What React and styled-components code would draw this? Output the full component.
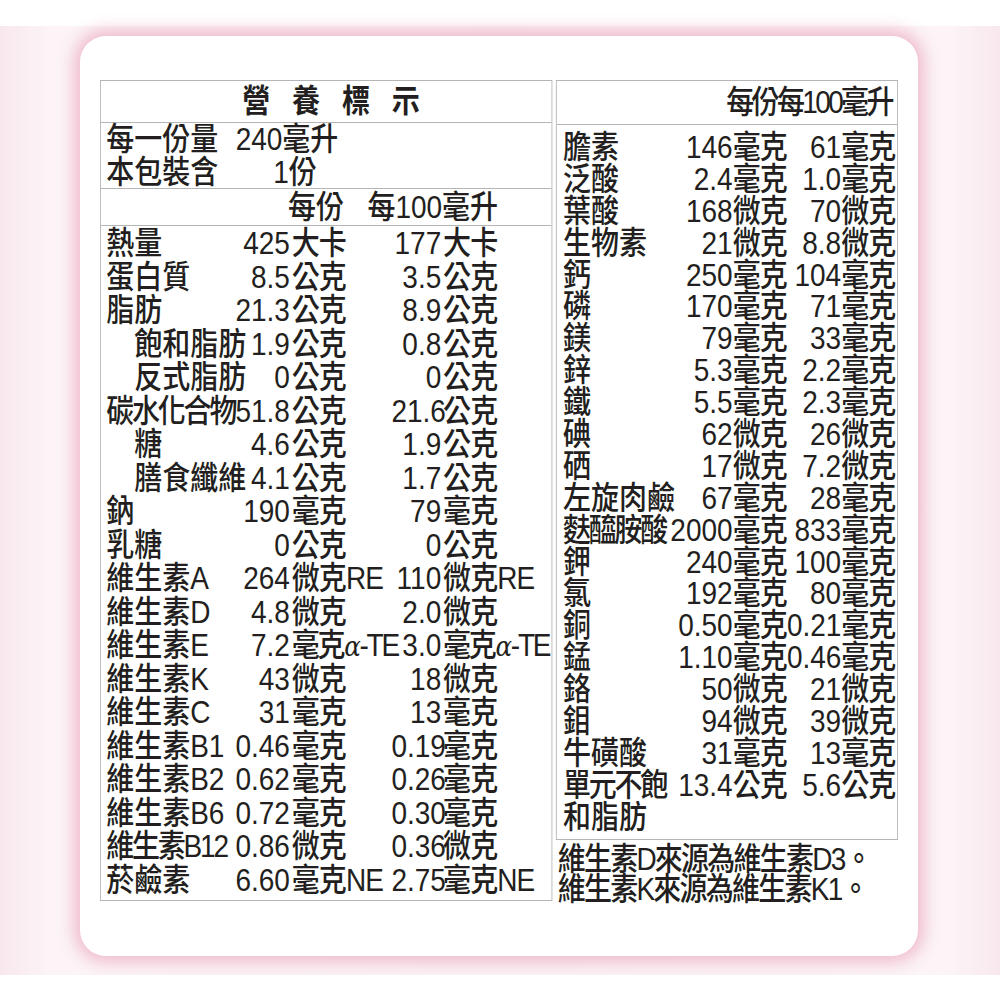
import React from "react";
import styled, { createGlobalStyle } from "styled-components";

const leftRows = [
  { name: "熱量", a: "425", au: "大卡", b: "177", bu: "大卡" },
  { name: "蛋白質", a: "8.5", au: "公克", b: "3.5", bu: "公克" },
  { name: "脂肪", a: "21.3", au: "公克", b: "8.9", bu: "公克" },
  { name: "飽和脂肪", a: "1.9", au: "公克", b: "0.8", bu: "公克", indent: true },
  { name: "反式脂肪", a: "0", au: "公克", b: "0", bu: "公克", indent: true },
  { name: "碳水化合物", a: "51.8", au: "公克", b: "21.6", bu: "公克", tight: true },
  { name: "糖", a: "4.6", au: "公克", b: "1.9", bu: "公克", indent: true },
  { name: "膳食纖維", a: "4.1", au: "公克", b: "1.7", bu: "公克", indent: true },
  { name: "鈉", a: "190", au: "毫克", b: "79", bu: "毫克" },
  { name: "乳糖", a: "0", au: "公克", b: "0", bu: "公克" },
  { name: "維生素A", a: "264", au: "微克RE", b: "110", bu: "微克RE" },
  { name: "維生素D", a: "4.8", au: "微克", b: "2.0", bu: "微克" },
  { name: "維生素E", a: "7.2", au: "毫克α-TE", b: "3.0", bu: "毫克α-TE" },
  { name: "維生素K", a: "43", au: "微克", b: "18", bu: "微克" },
  { name: "維生素C", a: "31", au: "毫克", b: "13", bu: "毫克" },
  { name: "維生素B1", a: "0.46", au: "毫克", b: "0.19", bu: "毫克" },
  { name: "維生素B2", a: "0.62", au: "毫克", b: "0.26", bu: "毫克" },
  { name: "維生素B6", a: "0.72", au: "毫克", b: "0.30", bu: "毫克" },
  { name: "維生素B12", a: "0.86", au: "微克", b: "0.36", bu: "微克", tight: true },
  { name: "菸鹼素", a: "6.60", au: "毫克NE", b: "2.75", bu: "毫克NE" },
];

const rightRows = [
  { name: "膽素", a: "146", au: "毫克", b: "61", bu: "毫克" },
  { name: "泛酸", a: "2.4", au: "毫克", b: "1.0", bu: "毫克" },
  { name: "葉酸", a: "168", au: "微克", b: "70", bu: "微克" },
  { name: "生物素", a: "21", au: "微克", b: "8.8", bu: "微克" },
  { name: "鈣", a: "250", au: "毫克", b: "104", bu: "毫克" },
  { name: "磷", a: "170", au: "毫克", b: "71", bu: "毫克" },
  { name: "鎂", a: "79", au: "毫克", b: "33", bu: "毫克" },
  { name: "鋅", a: "5.3", au: "毫克", b: "2.2", bu: "毫克" },
  { name: "鐵", a: "5.5", au: "毫克", b: "2.3", bu: "毫克" },
  { name: "碘", a: "62", au: "微克", b: "26", bu: "微克" },
  { name: "硒", a: "17", au: "微克", b: "7.2", bu: "微克" },
  { name: "左旋肉鹼", a: "67", au: "毫克", b: "28", bu: "毫克" },
  { name: "麩醯胺酸", a: "2000", au: "毫克", b: "833", bu: "毫克", tight: true },
  { name: "鉀", a: "240", au: "毫克", b: "100", bu: "毫克" },
  { name: "氯", a: "192", au: "毫克", b: "80", bu: "毫克" },
  { name: "銅", a: "0.50", au: "毫克", b: "0.21", bu: "毫克" },
  { name: "錳", a: "1.10", au: "毫克", b: "0.46", bu: "毫克" },
  { name: "鉻", a: "50", au: "微克", b: "21", bu: "微克" },
  { name: "鉬", a: "94", au: "微克", b: "39", bu: "微克" },
  { name: "牛磺酸", a: "31", au: "毫克", b: "13", bu: "毫克" },
  { name: "單元不飽", a: "13.4", au: "公克", b: "5.6", bu: "公克", tight: true },
  { name: "和脂肪" },
];

// units like 毫克α-TE get an italic alpha
function renderUnit(u) {
  if (!u || !u.includes("α")) return u;
  const [head, tail] = u.split("α");
  return (
    <Squeeze>
      {head}
      <Greek>α</Greek>
      {tail}
    </Squeeze>
  );
}

function LeftRow({ item }) {
  return (
    <LeftGrid>
      <NameNum $indent={item.indent}>
        <Name $tight={item.tight}>{item.name}</Name>
        <span>{item.a}</span>
      </NameNum>
      <Unit>{renderUnit(item.au)}</Unit>
      <Num>{item.b}</Num>
      <Unit>{renderUnit(item.bu)}</Unit>
    </LeftGrid>
  );
}

function RightRow({ item }) {
  return (
    <RightGrid>
      <NameNum>
        <Name $tight={item.tight}>{item.name}</Name>
        <span>{item.a}</span>
      </NameNum>
      <Unit $pad={0}>{item.au}</Unit>
      <Num>{item.b}</Num>
      <Unit $pad={0}>{item.bu}</Unit>
    </RightGrid>
  );
}

export default function App() {
  return (
    <>
      <GlobalStyle />
      <Band>
        <Card>
          <Condensed>
            <LeftTable>
              <Title>營養標示</Title>
              <Serving>
                <ServingLine>
                  <span>每一份量</span>
                  <span>240毫升</span>
                </ServingLine>
                <ServingLine>
                  <span>本包裝含</span>
                  <ServingValue $shift={43}>1份</ServingValue>
                </ServingLine>
              </Serving>
              <HeadRow>
                <span>每份</span>
                <span>每100毫升</span>
              </HeadRow>
              <LeftBody>
                {leftRows.map((r) => (
                  <LeftRow key={r.name} item={r} />
                ))}
              </LeftBody>
            </LeftTable>
            <RightColumn>
              <RightTable>
                <RightHead>每份每100毫升</RightHead>
                <RightBody>
                  {rightRows.map((r) => (
                    <RightRow key={r.name} item={r} />
                  ))}
                </RightBody>
              </RightTable>
              <Notes>
                <div>維生素D來源為維生素D3。</div>
                <div>維生素K來源為維生素K1。</div>
              </Notes>
            </RightColumn>
          </Condensed>
        </Card>
      </Band>
    </>
  );
}

const GlobalStyle = createGlobalStyle`
  html, body {
    margin: 0;
    padding: 0;
    background: #ffffff;
    overflow: hidden;
  }
  body {
    font-family: "Liberation Sans", "Noto Sans CJK TC", sans-serif;
    color: #231f20;
  }
`;

const Band = styled.div`
  margin-top: 26px;
  height: 949px;
  box-sizing: border-box;
  padding: 10px 0 0 80px;
  background: linear-gradient(
    to right,
    #f8e8ee 0%,
    #fcf4f6 5%,
    #fbf2f5 50%,
    #fcf4f6 95%,
    #f8e8ee 100%
  );
`;

const Card = styled.div`
  width: 838px;
  height: 920px;
  box-sizing: border-box;
  padding: 44px 20px 0;
  background: #ffffff;
  border-radius: 26px;
  box-shadow: 0 0 16px 6px rgba(236, 172, 196, 0.8);
`;

/* the label font is a condensed heiti, so the whole sheet is squeezed */
const Condensed = styled.div`
  width: 912px;
  display: flex;
  gap: 4px;
  align-items: flex-start;
  transform: scaleX(0.875);
  transform-origin: 0 0;
  font-size: 32px;
  font-weight: 500;
`;

const LeftTable = styled.div`
  width: 517px;
  box-sizing: border-box;
  border: 1px solid #b5b5b5;
`;

const Title = styled.div`
  height: 41px;
  line-height: 41px;
  border-bottom: 1px solid #b5b5b5;
  text-align: center;
  font-weight: 700;
  letter-spacing: 25px;
  padding-left: 36px;
`;

const Serving = styled.div`
  height: 65px;
  border-bottom: 1px solid #b5b5b5;
  padding-left: 6px;
`;

const ServingLine = styled.div`
  display: grid;
  grid-template-columns: 148px auto;
  height: 32.5px;
  line-height: 32.5px;
  white-space: nowrap;
`;

const ServingValue = styled.span`
  padding-left: ${(p) => p.$shift || 0}px;
`;

const HeadRow = styled.div`
  display: grid;
  grid-template-columns: 278px 176px;
  height: 36px;
  line-height: 36px;
  border-bottom: 1px solid #b5b5b5;
  text-align: right;
  white-space: nowrap;
`;

const LeftBody = styled.div`
  padding: 1px 0 3px 6px;
`;

const LeftGrid = styled.div`
  display: grid;
  grid-template-columns: 210px 116px 57px 1fr;
  height: 33.5px;
  line-height: 33.5px;
  white-space: nowrap;
`;

const NameNum = styled.div`
  display: flex;
  justify-content: space-between;
  padding-left: ${(p) => (p.$indent ? 32 : 0)}px;
`;

const Name = styled.span`
  letter-spacing: ${(p) => (p.$tight ? -2.5 : 0)}px;
`;

const Unit = styled.span`
  padding-left: ${(p) => (p.$pad ?? 2)}px;
  letter-spacing: -1px;
`;

const Num = styled.span`
  text-align: right;
`;

const Squeeze = styled.span`
  letter-spacing: -2.5px;
`;

const Greek = styled.i`
  font-family: "DejaVu Serif", "Liberation Serif", serif;
  font-size: 28px;
  padding: 0 1px;
`;

const RightColumn = styled.div`
  width: 391px;
  display: flex;
  flex-direction: column;
`;

const RightTable = styled.div`
  box-sizing: border-box;
  border: 1px solid #b5b5b5;
`;

const RightHead = styled.div`
  height: 43px;
  line-height: 43px;
  border-bottom: 1px solid #b5b5b5;
  text-align: right;
  padding-right: 6px;
  letter-spacing: -3px;
  white-space: nowrap;
`;

const RightBody = styled.div`
  padding: 7px 0 5px 7px;
`;

const RightGrid = styled.div`
  display: grid;
  grid-template-columns: 194px 62px 62px 1fr;
  height: 31.9px;
  line-height: 31.9px;
  white-space: nowrap;
`;

const Notes = styled.div`
  margin-top: 4px;
  padding-left: 2px;
  line-height: 30px;
  letter-spacing: -2px;
  white-space: nowrap;
`;
